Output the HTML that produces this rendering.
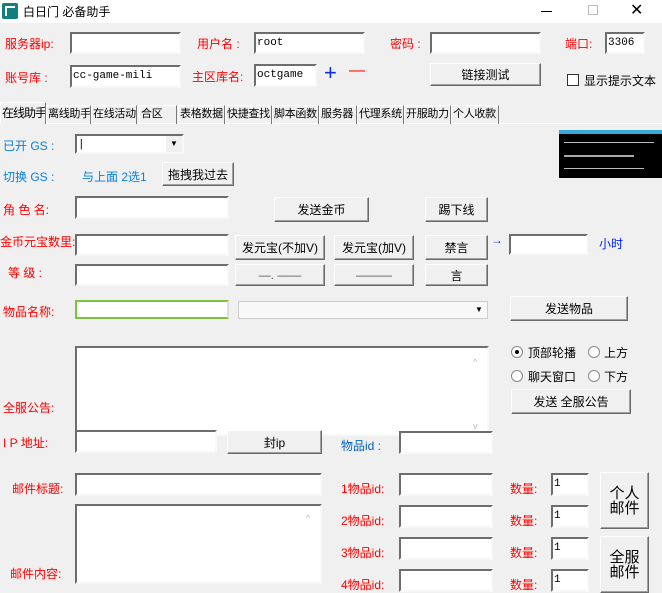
<!DOCTYPE html>
<html><head><meta charset="utf-8"><style>
*{margin:0;padding:0;box-sizing:border-box}
body{width:662px;height:582px;overflow:hidden;background:#f0f0f0;font-family:"Liberation Sans","Noto Sans CJK SC",sans-serif;font-size:12px;position:relative;color:#000}
.a{position:absolute;white-space:nowrap}
.r{color:#f00}.b{color:#0a7ee0}
.in{position:absolute;background:#fff;border:2px solid;border-color:#6d6d6d #f8f8f8 #f8f8f8 #6d6d6d;font-family:"Liberation Mono",monospace;font-size:11px;line-height:18px;padding-left:1px;overflow:hidden}
.bt{position:absolute;background:#f0f0f0;border:1px solid;border-color:#fff #6a6a6a #6a6a6a #fff;box-shadow:inset -1px -1px 0 #a0a0a0;text-align:center;font-size:12px;display:flex;align-items:center;justify-content:center}
.tab{position:absolute;top:105px;height:19px;border-top:1px solid #fff;border-left:1px solid #fff;border-right:1px solid #777;font-size:11px;letter-spacing:-0.3px;line-height:17px;padding-left:1px;overflow:hidden;white-space:nowrap}
.rad{position:absolute;width:12px;height:12px;border-radius:50%;background:#fff;border:1px solid #888}
</style></head><body>
<div class="a" style="left:0;top:0;width:662px;height:23px;background:#fff"></div>
<div class="a" style="left:2px;top:3px;width:16px;height:16px;background:#127e7e;border-radius:2px"></div>
<div class="a" style="left:5px;top:6px;width:10px;height:10px;border:2px solid #fff;border-width:2px 0 0 2px"></div>
<div class="a" style="left:23px;top:3px;font-size:12px">白日门  必备助手</div>
<div class="a" style="left:541px;top:11px;width:11px;height:1px;background:#000"></div>
<div class="a" style="left:588px;top:5px;width:10px;height:10px;border:1px solid #bbb"></div>
<div class="a" style="left:630px;top:0px;font-size:16px">✕</div>

<div class="a r" style="left:5px;top:35px">服务器ip:</div>
<div class="in" style="left:70px;top:32px;width:111px;height:22px"></div>
<div class="a r" style="left:197px;top:35px">用户名 :</div>
<div class="in" style="left:254px;top:32px;width:111px;height:22px">root</div>
<div class="a r" style="left:390px;top:35px">密码 :</div>
<div class="in" style="left:430px;top:32px;width:111px;height:22px"></div>
<div class="a r" style="left:565px;top:35px">端口:</div>
<div class="in" style="left:605px;top:32px;width:40px;height:22px">3306</div>

<div class="a r" style="left:5px;top:69px">账号库 :</div>
<div class="in" style="left:70px;top:65px;width:111px;height:23px">cc-game-mili</div>
<div class="a r" style="left:192px;top:68px">主区库名:</div>
<div class="in" style="left:254px;top:64px;width:63px;height:23px">octgame</div>
<div class="a" style="left:324px;top:60px;color:#1030e0;font-size:22px">+</div>
<div class="a" style="left:349px;top:62px;color:#f00;font-size:16px">—</div>
<div class="bt" style="left:430px;top:63px;width:111px;height:23px">链接测试</div>
<div class="a" style="left:567px;top:74px;width:12px;height:12px;background:#fff;border:1px solid #333"></div>
<div class="a" style="left:584px;top:72px">显示提示文本</div>

<div class="a" style="left:0;top:123px;width:662px;height:1px;background:#fff"></div>
<div class="tab" style="left:0;top:102px;height:22px;width:46px;background:#f0f0f0;line-height:20px;font-size:12px;letter-spacing:-1px">在线助手</div>
<div class="tab" style="left:46px;width:45px">离线助手</div>
<div class="tab" style="left:91px;width:46px">在线活动</div>
<div class="tab" style="left:139px;width:38px">合区</div>
<div class="tab" style="left:178px;width:47px">表格数据</div>
<div class="tab" style="left:225px;width:47px">快捷查找</div>
<div class="tab" style="left:272px;width:47px">脚本函数</div>
<div class="tab" style="left:319px;width:38px">服务器</div>
<div class="tab" style="left:357px;width:47px">代理系统</div>
<div class="tab" style="left:404px;width:47px">开服助力</div>
<div class="tab" style="left:451px;width:48px">个人收款</div>

<div class="a b" style="left:3px;top:137px;font-size:12px">已开 GS :</div>
<div class="in" style="left:75px;top:134px;width:109px;height:20px">|</div>
<div class="a" style="left:166px;top:136px;width:16px;height:16px;background:#f0f0f0;font-size:8px;text-align:center;line-height:16px">▼</div>
<div class="a" style="left:559px;top:130px;width:103px;height:48px;background:#000;border-top:4px solid #38a8d8"></div>
<div class="a" style="left:564px;top:142px;width:90px;height:1px;background:#bbb"></div>
<div class="a" style="left:564px;top:155px;width:70px;height:2px;background:#aaa"></div>
<div class="a" style="left:564px;top:168px;width:80px;height:1px;background:#bbb"></div>

<div class="a b" style="left:3px;top:168px;font-size:12px">切换 GS :</div>
<div class="a b" style="left:82px;top:168px;font-size:12px">与上面 2选1</div>
<div class="bt" style="left:162px;top:162px;width:72px;height:24px">拖拽我过去</div>

<div class="a r" style="left:3px;top:201px">角 色 名:</div>
<div class="in" style="left:75px;top:196px;width:154px;height:23px"></div>
<div class="bt" style="left:274px;top:197px;width:95px;height:25px">发送金币</div>
<div class="bt" style="left:425px;top:197px;width:63px;height:25px">踢下线</div>

<div class="a r" style="left:0;top:233px">金币元宝数里:</div>
<div class="in" style="left:75px;top:234px;width:154px;height:22px"></div>
<div class="bt" style="left:235px;top:235px;width:90px;height:25px">发元宝(不加V)</div>
<div class="bt" style="left:334px;top:235px;width:80px;height:25px">发元宝(加V)</div>
<div class="bt" style="left:425px;top:235px;width:63px;height:25px">禁言</div>
<div class="a b" style="left:491px;top:233px;color:#1030e0">→</div>
<div class="in" style="left:509px;top:234px;width:79px;height:21px"></div>
<div class="a" style="left:599px;top:235px;color:#0020ff">小时</div>

<div class="a r" style="left:8px;top:264px">等   级 :</div>
<div class="in" style="left:75px;top:264px;width:154px;height:22px"></div>
<div class="bt" style="left:235px;top:264px;width:90px;height:22px;color:#555">—. ——</div>
<div class="bt" style="left:334px;top:264px;width:80px;height:22px;color:#555">———</div>
<div class="bt" style="left:425px;top:264px;width:63px;height:22px">言</div>

<div class="a r" style="left:3px;top:303px">物品名称:</div>
<div class="a" style="left:75px;top:300px;width:154px;height:19px;background:#fff;border:2px solid #7cc33a;border-right-color:#ddd"></div>
<div class="a" style="left:238px;top:301px;width:250px;height:18px;background:#f8f8f8;border:1px solid #ccc"></div>
<div class="a" style="left:472px;top:303px;width:14px;height:14px;font-size:8px;text-align:center;line-height:14px">▼</div>
<div class="bt" style="left:510px;top:296px;width:118px;height:25px">发送物品</div>

<div class="in" style="left:75px;top:346px;width:414px;height:90px"></div>
<div class="a" style="left:473px;top:357px;color:#bbb;font-size:9px">^</div>
<div class="a" style="left:473px;top:421px;color:#bbb;font-size:9px">v</div>
<div class="a r" style="left:3px;top:399px">全服公告:</div>
<div class="rad" style="left:511px;top:346px"></div><div class="a" style="left:515px;top:350px;width:4px;height:4px;background:#000;border-radius:50%"></div>
<div class="a" style="left:528px;top:344px">顶部轮播</div>
<div class="rad" style="left:588px;top:346px"></div><div class="a" style="left:604px;top:344px">上方</div>
<div class="rad" style="left:511px;top:370px"></div><div class="a" style="left:528px;top:368px">聊天窗口</div>
<div class="rad" style="left:588px;top:370px"></div><div class="a" style="left:604px;top:368px">下方</div>
<div class="bt" style="left:511px;top:389px;width:120px;height:25px">发送 全服公告</div>

<div class="a r" style="left:3px;top:434px">I P 地址:</div>
<div class="in" style="left:75px;top:430px;width:142px;height:23px"></div>
<div class="bt" style="left:227px;top:430px;width:95px;height:24px">封ip</div>
<div class="a" style="left:341px;top:437px;color:#0060c0">物品id :</div>
<div class="in" style="left:399px;top:431px;width:94px;height:23px"></div>

<div class="a r" style="left:12px;top:480px">邮件标题:</div>
<div class="in" style="left:75px;top:473px;width:247px;height:23px"></div>
<div class="in" style="left:75px;top:504px;width:247px;height:80px"></div>
<div class="a" style="left:306px;top:513px;color:#bbb;font-size:9px">^</div>
<div class="a r" style="left:10px;top:565px">邮件内容:</div>

<div class="a r" style="left:341px;top:480px">1物品id:</div>
<div class="in" style="left:399px;top:473px;width:94px;height:23px"></div>
<div class="a r" style="left:510px;top:480px">数量:</div>
<div class="in" style="left:551px;top:473px;width:38px;height:23px">1</div>
<div class="a r" style="left:341px;top:512px">2物品id:</div>
<div class="in" style="left:399px;top:505px;width:94px;height:23px"></div>
<div class="a r" style="left:510px;top:512px">数量:</div>
<div class="in" style="left:551px;top:505px;width:38px;height:23px">1</div>
<div class="a r" style="left:341px;top:544px">3物品id:</div>
<div class="in" style="left:399px;top:537px;width:94px;height:23px"></div>
<div class="a r" style="left:510px;top:544px">数量:</div>
<div class="in" style="left:551px;top:537px;width:38px;height:23px">1</div>
<div class="a r" style="left:341px;top:576px">4物品id:</div>
<div class="in" style="left:399px;top:569px;width:94px;height:23px"></div>
<div class="a r" style="left:510px;top:576px">数量:</div>
<div class="in" style="left:551px;top:569px;width:38px;height:23px">1</div>
<div class="bt" style="left:600px;top:472px;width:49px;height:57px;font-size:15px;line-height:15px">个人<br>邮件</div>
<div class="bt" style="left:600px;top:536px;width:49px;height:57px;font-size:15px;line-height:15px">全服<br>邮件</div>
</body></html>
